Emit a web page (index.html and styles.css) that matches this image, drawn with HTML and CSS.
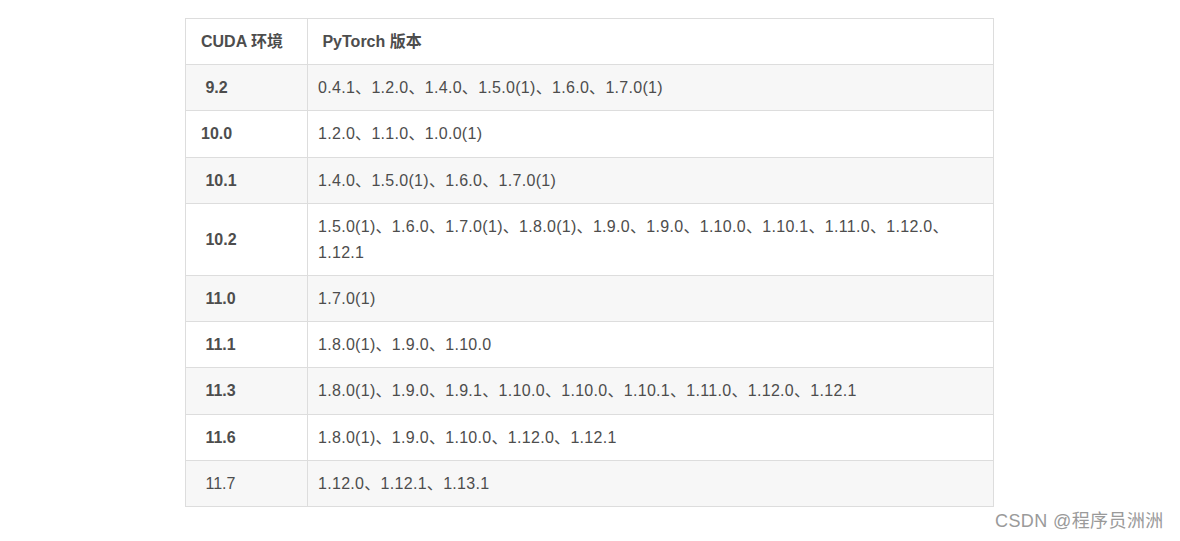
FILE: index.html
```html
<!DOCTYPE html>
<html lang="zh-CN">
<head>
<meta charset="utf-8">
<title>CUDA 与 PyTorch 版本对应</title>
<link rel="stylesheet" href="styles.css">
</head>
<body>
<div class="page">
  <table class="ver-table">
    <thead>
      <tr><th class="c1">CUDA 环境</th><th class="c2">&nbsp;PyTorch 版本</th></tr>
    </thead>
    <tbody>
      <tr class="odd"><td class="c1"><b>&nbsp;9.2</b></td><td class="c2">0.4.1、1.2.0、1.4.0、1.5.0(1)、1.6.0、1.7.0(1)</td></tr>
      <tr><td class="c1"><b>10.0</b></td><td class="c2">1.2.0、1.1.0、1.0.0(1)</td></tr>
      <tr class="odd"><td class="c1"><b>&nbsp;10.1</b></td><td class="c2">1.4.0、1.5.0(1)、1.6.0、1.7.0(1)</td></tr>
      <tr><td class="c1"><b>&nbsp;10.2</b></td><td class="c2">1.5.0(1)、1.6.0、1.7.0(1)、1.8.0(1)、1.9.0、1.9.0、1.10.0、1.10.1、1.11.0、1.12.0、1.12.1</td></tr>
      <tr class="odd"><td class="c1"><b>&nbsp;11.0</b></td><td class="c2">1.7.0(1)</td></tr>
      <tr><td class="c1"><b>&nbsp;11.1</b></td><td class="c2">1.8.0(1)、1.9.0、1.10.0</td></tr>
      <tr class="odd"><td class="c1"><b>&nbsp;11.3</b></td><td class="c2">1.8.0(1)、1.9.0、1.9.1、1.10.0、1.10.0、1.10.1、1.11.0、1.12.0、1.12.1</td></tr>
      <tr><td class="c1"><b>&nbsp;11.6</b></td><td class="c2">1.8.0(1)、1.9.0、1.10.0、1.12.0、1.12.1</td></tr>
      <tr class="odd"><td class="c1">&nbsp;11.7</td><td class="c2">1.12.0、1.12.1、1.13.1</td></tr>
    </tbody>
  </table>
  <div class="watermark">CSDN @程序员洲洲</div>
</div>
</body>
</html>
```
FILE: styles.css
```css
html, body {
  margin: 0;
  padding: 0;
  background: #ffffff;
}
body {
  font-family: "Liberation Sans", Arial, "Noto Sans CJK SC", sans-serif;
  color: #4d4d4d;
}
.page {
  position: relative;
  width: 1180px;
  height: 541px;
  padding-top: 18px;
  box-sizing: border-box;
}
.ver-table {
  border-collapse: collapse;
  width: 809px;
  margin: 0 auto 0 185px;
  font-size: 16px;
  line-height: 26px;
  table-layout: fixed;
}
.ver-table th,
.ver-table td {
  border: 1px solid #dddddd;
  padding: 10px 10px 9.2px 10px;
  text-align: left;
  vertical-align: middle;
}
.ver-table th {
  font-weight: bold;
}
.ver-table .c1 {
  width: 122px;
  padding-left: 15px;
  box-sizing: border-box;
}
.ver-table td.c2 {
  letter-spacing: 0.3px;
}
.ver-table tr.odd td {
  background: #f7f7f7;
}
.watermark {
  position: absolute;
  left: 995px;
  top: 508px;
  font-size: 18px;
  line-height: 26px;
  color: #9a9a9a;
  letter-spacing: 0.4px;
  white-space: nowrap;
}
```
